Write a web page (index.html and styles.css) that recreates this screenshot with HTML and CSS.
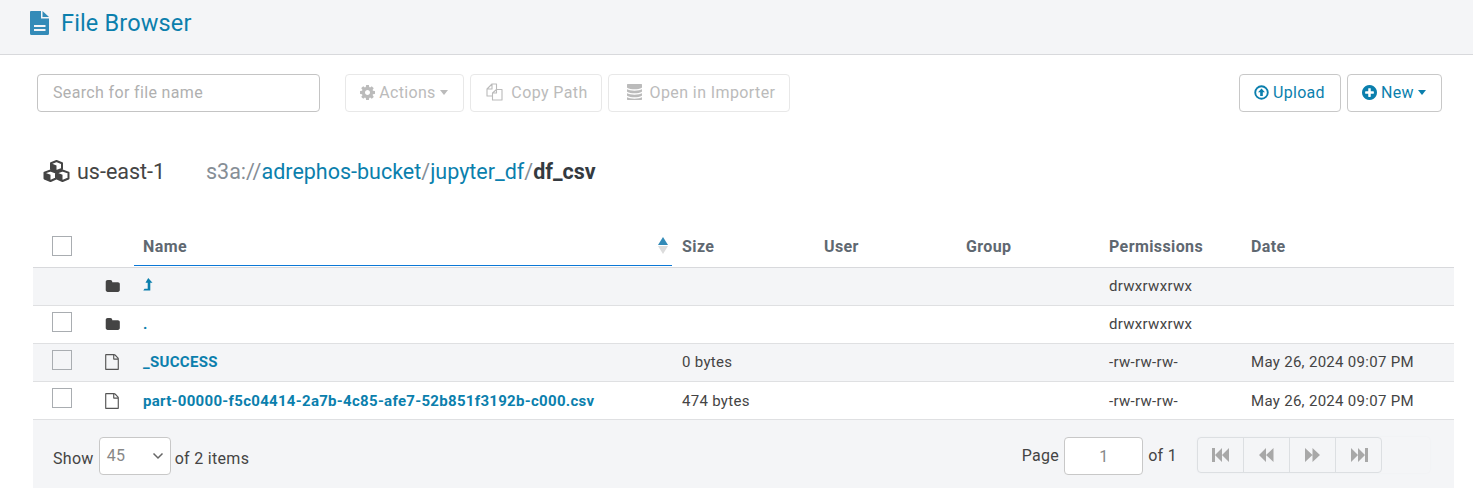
FILE: index.html
```html
<!DOCTYPE html>
<html>
  <head>
    <meta charset="UTF-8" />
    <title>File Browser</title>
    <link rel="stylesheet" href="styles.css">
  </head>

  <body>
    <svg width="0" height="0" class="defs">
      <symbol id="i-file-text" viewBox="0 0 19 24"><path fill-rule="evenodd" d="M1 0H11V7.500H19V22.500Q19 24 17.500 24H1.500Q0 24 0 22.500V1Q0 0 1 0ZM4 14V16H15.500V14ZM4 18V20H15.500V18Z"/><path d="M12.500 0 19 6H12.500Z"/></symbol>
      <symbol id="i-cog" viewBox="128 128 1536 1536"><path d="M1152 896q0-106-75-181t-181-75-181 75-75 181 75 181 181 75 181-75 75-181zm512-109v222q0 12-8 23t-20 13l-185 28q-19 54-39 91 35 50 107 138 10 12 10 25t-9 23q-27 37-99 108t-94 71q-12 0-26-9l-138-108q-44 23-91 38-16 136-29 186-7 28-36 28h-222q-14 0-24.500-8.500t-11.500-21.500l-28-184q-49-16-90-37l-141 107q-10 9-25 9-14 0-25-11-126-114-165-168-7-10-7-23 0-12 8-23 15-21 51-66.500t54-70.500q-27-50-41-99l-183-27q-13-2-21-12.500t-8-23.500v-222q0-12 8-23t19-13l186-28q14-46 39-92-40-57-107-138-10-12-10-24 0-10 9-23 26-36 98.500-107.500t94.500-71.500q13 0 26 10l138 107q44-23 91-38 16-136 29-186 7-28 36-28h222q14 0 24.500 8.500t11.500 21.500l28 184q49 16 90 37l142-107q9-9 24-9 13 0 25 10 129 119 165 170 7 8 7 22 0 12-8 23-15 21-51 66.500t-54 70.500q26 50 41 98l183 28q13 2 21 12.500t8 23.500z"/></symbol>
      <symbol id="i-files" viewBox="0 0 17 18"><path d="M6 13H1V6L6 1H10.500V6.500M6 1V6H1M6.500 10 10.500 6.500H16V17H6.500ZM10.500 6.500V10H6.500" fill="none" stroke="currentColor" stroke-width="1.100" stroke-linejoin="round"/></symbol>
      <symbol id="i-database" viewBox="224 128 1344 1536"><path d="M896 768q237 0 443-43t325-127v170q0 69-103 128t-280 93.500-385 34.500-385-34.500-280-93.500-103-128v-170q119 84 325 127t443 43zm0 768q237 0 443-43t325-127v170q0 69-103 128t-280 93.500-385 34.500-385-34.500-280-93.500-103-128v-170q119 84 325 127t443 43zm0-384q237 0 443-43t325-127v170q0 69-103 128t-280 93.500-385 34.500-385-34.500-280-93.500-103-128v-170q119 84 325 127t443 43zm0-1152q208 0 385 34.500t280 93.500 103 128v128q0 69-103 128t-280 93.500-385 34.500-385-34.500-280-93.500-103-128v-128q0-69 103-128t280-93.500 385-34.500z"/></symbol>
      <symbol id="i-upload" viewBox="0 0 16 16"><circle cx="8" cy="8" r="6.700" fill="none" stroke="currentColor" stroke-width="2"/><path d="M8 3.600 11.700 7.600H9.400V11.800H6.600V7.600H4.300z"/></symbol>
      <symbol id="i-plus" viewBox="128 128 1536 1536"><path d="M1344 960v-128q0-26-19-45t-45-19h-256v-256q0-26-19-45t-45-19h-128q-26 0-45 19t-19 45v256h-256q-26 0-45 19t-19 45v128q0 26 19 45t45 19h256v256q0 26 19 45t45 19h128q26 0 45-19t19-45v-256h256q26 0 45-19t19-45zm320-64q0 209-103 385.500t-279.500 279.500-385.500 103-385.500-103-279.500-279.500-103-385.500 103-385.500 279.500-279.500 385.500-103 385.500 103 279.500 279.500 103 385.500z"/></symbol>
      <symbol id="i-cubes" viewBox="0 0 27 22"><path d="M13.500 1 19 3.200V9L13.500 11 8 9V3.200zM7.500 10.500 13 12.600V18.500L7.500 21 1.500 18.500V12.600zM19.500 10.500 25.500 12.600V18.500L19.500 21 14 18.500V12.600z" fill="none" stroke="currentColor" stroke-width="2" stroke-linejoin="round"/><path d="M8 3.200 13.500 5.400V11L8 9zM1.500 12.600 7.500 14.800V21L1.500 18.500zM14 12.600 19.500 14.800V21L14 18.500z"/></symbol>
      <symbol id="i-folder" viewBox="0 0 1728 1536"><path d="M1728 608v704q0 92-66 158t-158 66h-1216q-92 0-158-66t-66-158v-960q0-92 66-158t158-66h320q92 0 158 66t66 158v32h672q92 0 158 66t66 158z" transform="translate(0 -128)"/></symbol>
      <symbol id="i-file" viewBox="0 0 1536 1792"><path d="M1468 380q28 28 48 76t20 88v1152q0 40-28 68t-68 28h-1344q-40 0-68-28t-28-68v-1600q0-40 28-68t68-28h896q40 0 88 20t76 48zm-444-244v376h376q-10-29-22-41l-313-313q-12-12-41-22zm384 1528v-1024h-416q-40 0-68-28t-28-68v-416h-768v1536h1280z"/></symbol>
      <symbol id="i-level-up" viewBox="0 0 10 13"><path d="M5.200 0 9.500 4.800H7.300V12.500H0.300L1.500 10.800H4.700V4.800H2.500z"/></symbol>
      <symbol id="i-first" viewBox="0 0 18 14"><path d="M0 0H3V14H0zM3 7 10 0V14zM10 7 17 0V14z"/></symbol>
      <symbol id="i-prev" viewBox="0 0 15 14"><path d="M0 7 7 0V14zM7 7 14.500 0V14z"/></symbol>
      <symbol id="i-next" viewBox="0 0 15 14"><path d="M0 0 7.500 7 0 14zM7.500 0 15 7 7.500 14z"/></symbol>
      <symbol id="i-last" viewBox="0 0 18 14"><path d="M1 0 8 7 1 14zM8 0 15 7 8 14zM15 0H18V14H15z"/></symbol>
    </svg>

    <header class="page-head">
      <svg class="head-icon"><use href="#i-file-text" /></svg>
      <span class="head-title">File Browser</span>
    </header>

    <div class="toolbar">
      <input class="search" type="text" placeholder="Search for file name" />
      <button class="btn btn-off btn-actions"><svg class="ico"><use href="#i-cog" /></svg><span class="lbl">Actions</span><span class="caret"></span></button>
      <button class="btn btn-off btn-copy"><svg class="ico ico-copy"><use href="#i-files" /></svg><span class="lbl lbl-wide">Copy Path</span></button>
      <button class="btn btn-off btn-importer"><svg class="ico ico-db"><use href="#i-database" /></svg><span class="lbl lbl-wide">Open in Importer</span></button>
      <div class="spacer"></div>
      <button class="btn btn-on btn-upload"><svg class="ico"><use href="#i-upload" /></svg><span class="lbl">Upload</span></button>
      <button class="btn btn-on btn-new"><svg class="ico"><use href="#i-plus" /></svg><span class="lbl">New</span><span class="caret"></span></button>
    </div>

    <div class="crumbs">
      <svg class="cubes"><use href="#i-cubes" /></svg>
      <span class="region">us-east-1</span>
      <span class="path">s3a://<a href="#">adrephos-bucket</a>/<a href="#">jupyter_df</a>/<b>df_csv</b></span>
    </div>

    <div class="files">
      <table class="file-table">
        <colgroup>
          <col class="c-check" /><col class="c-icon" /><col class="c-name" />
          <col class="c-mid" /><col class="c-mid" /><col class="c-wide" /><col class="c-mid" /><col />
        </colgroup>
        <thead>
          <tr>
            <th class="check-cell"><span class="check"></span></th>
            <th></th>
            <th class="sorted">Name<span class="sort"><i class="up"></i><i class="down"></i></span></th>
            <th>Size</th>
            <th>User</th>
            <th>Group</th>
            <th>Permissions</th>
            <th>Date</th>
          </tr>
        </thead>
        <tbody>
          <tr class="odd">
            <td></td>
            <td class="type"><svg class="folder"><use href="#i-folder" /></svg></td>
            <td><a href="#"><svg class="level-up"><use href="#i-level-up" /></svg></a></td>
            <td></td><td></td><td></td>
            <td>drwxrwxrwx</td>
            <td></td>
          </tr>
          <tr>
            <td class="check-cell"><span class="check"></span></td>
            <td class="type"><svg class="folder"><use href="#i-folder" /></svg></td>
            <td><a href="#">.</a></td>
            <td></td><td></td><td></td>
            <td>drwxrwxrwx</td>
            <td></td>
          </tr>
          <tr class="odd">
            <td class="check-cell"><span class="check"></span></td>
            <td class="type"><svg class="doc"><use href="#i-file" /></svg></td>
            <td><a href="#">_SUCCESS</a></td>
            <td>0 bytes</td><td></td><td></td>
            <td>-rw-rw-rw-</td>
            <td>May 26, 2024 09:07 PM</td>
          </tr>
          <tr>
            <td class="check-cell"><span class="check"></span></td>
            <td class="type"><svg class="doc"><use href="#i-file" /></svg></td>
            <td><a href="#">part-00000-f5c04414-2a7b-4c85-afe7-52b851f3192b-c000.csv</a></td>
            <td>474 bytes</td><td></td><td></td>
            <td>-rw-rw-rw-</td>
            <td>May 26, 2024 09:07 PM</td>
          </tr>
        </tbody>
      </table>

      <div class="pager">
        <span class="pager-label">Show</span>
        <div class="page-size">45<svg class="chev" viewBox="0 0 12 8"><path d="M1.500 1.500 6 6l4.500-4.500" fill="none" stroke="currentColor" stroke-width="1.500"/></svg></div>
        <span class="pager-label">of 2 items</span>
        <div class="spacer"></div>
        <span>Page</span>
        <input class="page-num" type="text" value="1" />
        <span>of 1</span>
        <div class="page-nav">
          <div class="page-btns">
            <span class="page-btn"><svg class="nav-wide"><use href="#i-first" /></svg></span>
            <span class="page-btn"><svg class="nav"><use href="#i-prev" /></svg></span>
            <span class="page-btn"><svg class="nav"><use href="#i-next" /></svg></span>
            <span class="page-btn"><svg class="nav-wide"><use href="#i-last" /></svg></span>
          </div>
        </div>
      </div>
    </div>
  </body>
</html>
```

FILE: styles.css
```css
body {
  font-family: Roboto, "Liberation Sans", sans-serif;
  margin: 0;
  padding: 0;
  color: #444;
  background: #fff;
  font-size: 15px;
  letter-spacing: 0.3px;
}

a {
  color: #0b7fad;
  text-decoration: none;
}

.defs {
  position: absolute;
}

.spacer {
  flex: 1;
}

.page-head {
  display: flex;
  align-items: center;
  height: 46px;
  padding: 0 0 8px 30px;
  background: #f4f5f7;
  border-bottom: 1px solid #d8d9dc;
}

.head-icon {
  width: 19px;
  height: 24px;
  fill: #338bb8;
  margin-right: 12px;
}

.head-title {
  font-size: 23.5px;
  letter-spacing: 0.15px;
  color: #0b7fad;
}

.toolbar {
  display: flex;
  align-items: center;
  gap: 6px;
  margin-top: 19px;
  padding: 0 31px 0 37px;
}

.search {
  box-sizing: border-box;
  width: 283px;
  height: 38px;
  padding: 0 15px 2px;
  margin-right: 19px;
  border: 1px solid #c4c4c4;
  border-radius: 4px;
  font-family: inherit;
  font-size: 16px;
  letter-spacing: 0.35px;
  background: #fff;
}

.search::placeholder {
  color: #b0b0b0;
}

.btn {
  display: flex;
  align-items: center;
  justify-content: center;
  box-sizing: border-box;
  height: 38px;
  padding: 0 1px 2px 0;
  background: #fff;
  border-radius: 4px;
  font-family: inherit;
  font-size: 16px;
  letter-spacing: 0.3px;
}

.btn-off {
  border: 1px solid #e8e8e8;
  color: #bbb;
}

.btn-on {
  border: 1px solid #c8c8c8;
  color: #0b7fad;
}

.btn-actions { width: 119px; }
.btn-copy { width: 132px; padding: 0 0 2px 2px; }
.btn-importer { width: 182px; padding: 0 0 2px 4px; }
.btn-upload { width: 102px; }
.btn-new { width: 95px; }

.ico {
  width: 15px;
  height: 15px;
  fill: currentColor;
}

.ico-copy {
  width: 17px;
  height: 18px;
}

.ico-db {
  width: 15px;
  height: 16px;
}

.lbl {
  margin-left: 4px;
}

.lbl-wide {
  margin-left: 8px;
  letter-spacing: 0.4px;
}

.caret {
  display: inline-block;
  margin-left: 4px;
  border-top: 5px solid currentColor;
  border-left: 4.5px solid transparent;
  border-right: 4.5px solid transparent;
}

.crumbs {
  display: flex;
  align-items: center;
  height: 40px;
  margin-top: 39px;
  padding-left: 43px;
  font-size: 21.5px;
  letter-spacing: 0;
}

.cubes {
  width: 27px;
  height: 22px;
  fill: #444;
  color: #444;
  margin-right: 7px;
}

.region {
  width: 129px;
  color: #444;
}

.path {
  color: #868e96;
}

.path b {
  color: #343a40;
  font-weight: 700;
}

.files {
  margin: 36px 19px 0 33px;
}

.file-table {
  width: 100%;
  table-layout: fixed;
  border-collapse: collapse;
}

.c-check { width: 57px; }
.c-icon { width: 44px; }
.c-name { width: 538px; }
.c-mid { width: 142px; }
.c-wide { width: 143px; }

.file-table th {
  height: 40px;
  padding: 0 0 1px 10px;
  box-sizing: border-box;
  text-align: left;
  font-size: 16px;
  letter-spacing: 0.4px;
  font-weight: 700;
  color: #5f6871;
  border-bottom: 1px solid #d8d9dc;
}

.file-table th.sorted {
  position: relative;
  padding-left: 9px;
}

.file-table th.sorted::after {
  content: "";
  position: absolute;
  left: 0;
  right: 0;
  bottom: 1px;
  height: 1px;
  background: #0b78d6;
}

.file-table td {
  height: 38px;
  padding: 0 0 0 10px;
  box-sizing: border-box;
  border-bottom: 1px solid #dfe0e2;
}

.file-table td:nth-child(3) {
  padding-left: 9px;
  font-weight: 700;
}

.file-table tbody tr:last-child td:not(.check-cell) {
  padding-top: 2px;
}

.file-table .odd td {
  background: #f4f5f7;
}

.file-table .check-cell {
  padding-left: 19px;
}

.file-table td.check-cell .check {
  margin-bottom: 4px;
}

.check {
  display: block;
  box-sizing: border-box;
  width: 20px;
  height: 20px;
  border: 1px solid #a9adb1;
  background: #fff;
}

.odd .check {
  background: #f4f5f7;
}

.sort {
  position: absolute;
  right: 4px;
  top: 10px;
  display: flex;
  flex-direction: column;
  gap: 1px;
}

.sort i {
  display: block;
  border-left: 5.500px solid transparent;
  border-right: 5.500px solid transparent;
}

.sort .up {
  border-bottom: 8px solid #338bb8;
}

.sort .down {
  border-top: 8px solid #dcdcdc;
}

.file-table .type {
  padding-left: 15px;
  line-height: 0;
}

.folder {
  width: 15px;
  height: 13px;
  fill: #444;
}

.doc {
  width: 14px;
  height: 16px;
  fill: #555;
}

.level-up {
  width: 10px;
  height: 13px;
  fill: #0b7fad;
}

.pager {
  display: flex;
  align-items: center;
  gap: 5px;
  box-sizing: border-box;
  height: 68px;
  padding: 4px 24px 0 20px;
  background: #f4f5f7;
  font-size: 16px;
}

.pager-label {
  padding-top: 6px;
}

.page-size {
  display: flex;
  align-items: center;
  justify-content: space-between;
  box-sizing: border-box;
  width: 72px;
  height: 38px;
  margin-right: -1px;
  padding: 0 6px 0 7px;
  background: #fff;
  border: 1px solid #c8c8c8;
  border-radius: 4px;
  color: #888;
}

.chev {
  width: 12px;
  height: 8px;
  color: #666;
}

.page-num {
  box-sizing: border-box;
  width: 79px;
  height: 38px;
  padding: 1px 0 0;
  border: 1px solid #c8c8c8;
  border-radius: 4px;
  background: #fff;
  text-align: center;
  font-family: inherit;
  font-size: 16px;
  color: #888;
}

.page-nav {
  width: 233px;
  height: 36px;
  margin: -2px 0 0 15px;
  border-radius: 4px;
  box-shadow: 0 0 2px #eceef0;
}

.page-btns {
  display: flex;
  box-sizing: border-box;
  width: 185px;
  height: 36px;
  border: 1px solid #dcdfe2;
  border-radius: 4px;
}

.page-btn {
  display: flex;
  align-items: center;
  justify-content: center;
  flex: 1;
  border-right: 1px solid #dcdfe2;
}

.page-btn:last-child {
  border-right: 0;
}

.nav,
.nav-wide {
  height: 14px;
  fill: #a8a8a8;
}

.nav { width: 15px; }
.nav-wide { width: 18px; }
```
